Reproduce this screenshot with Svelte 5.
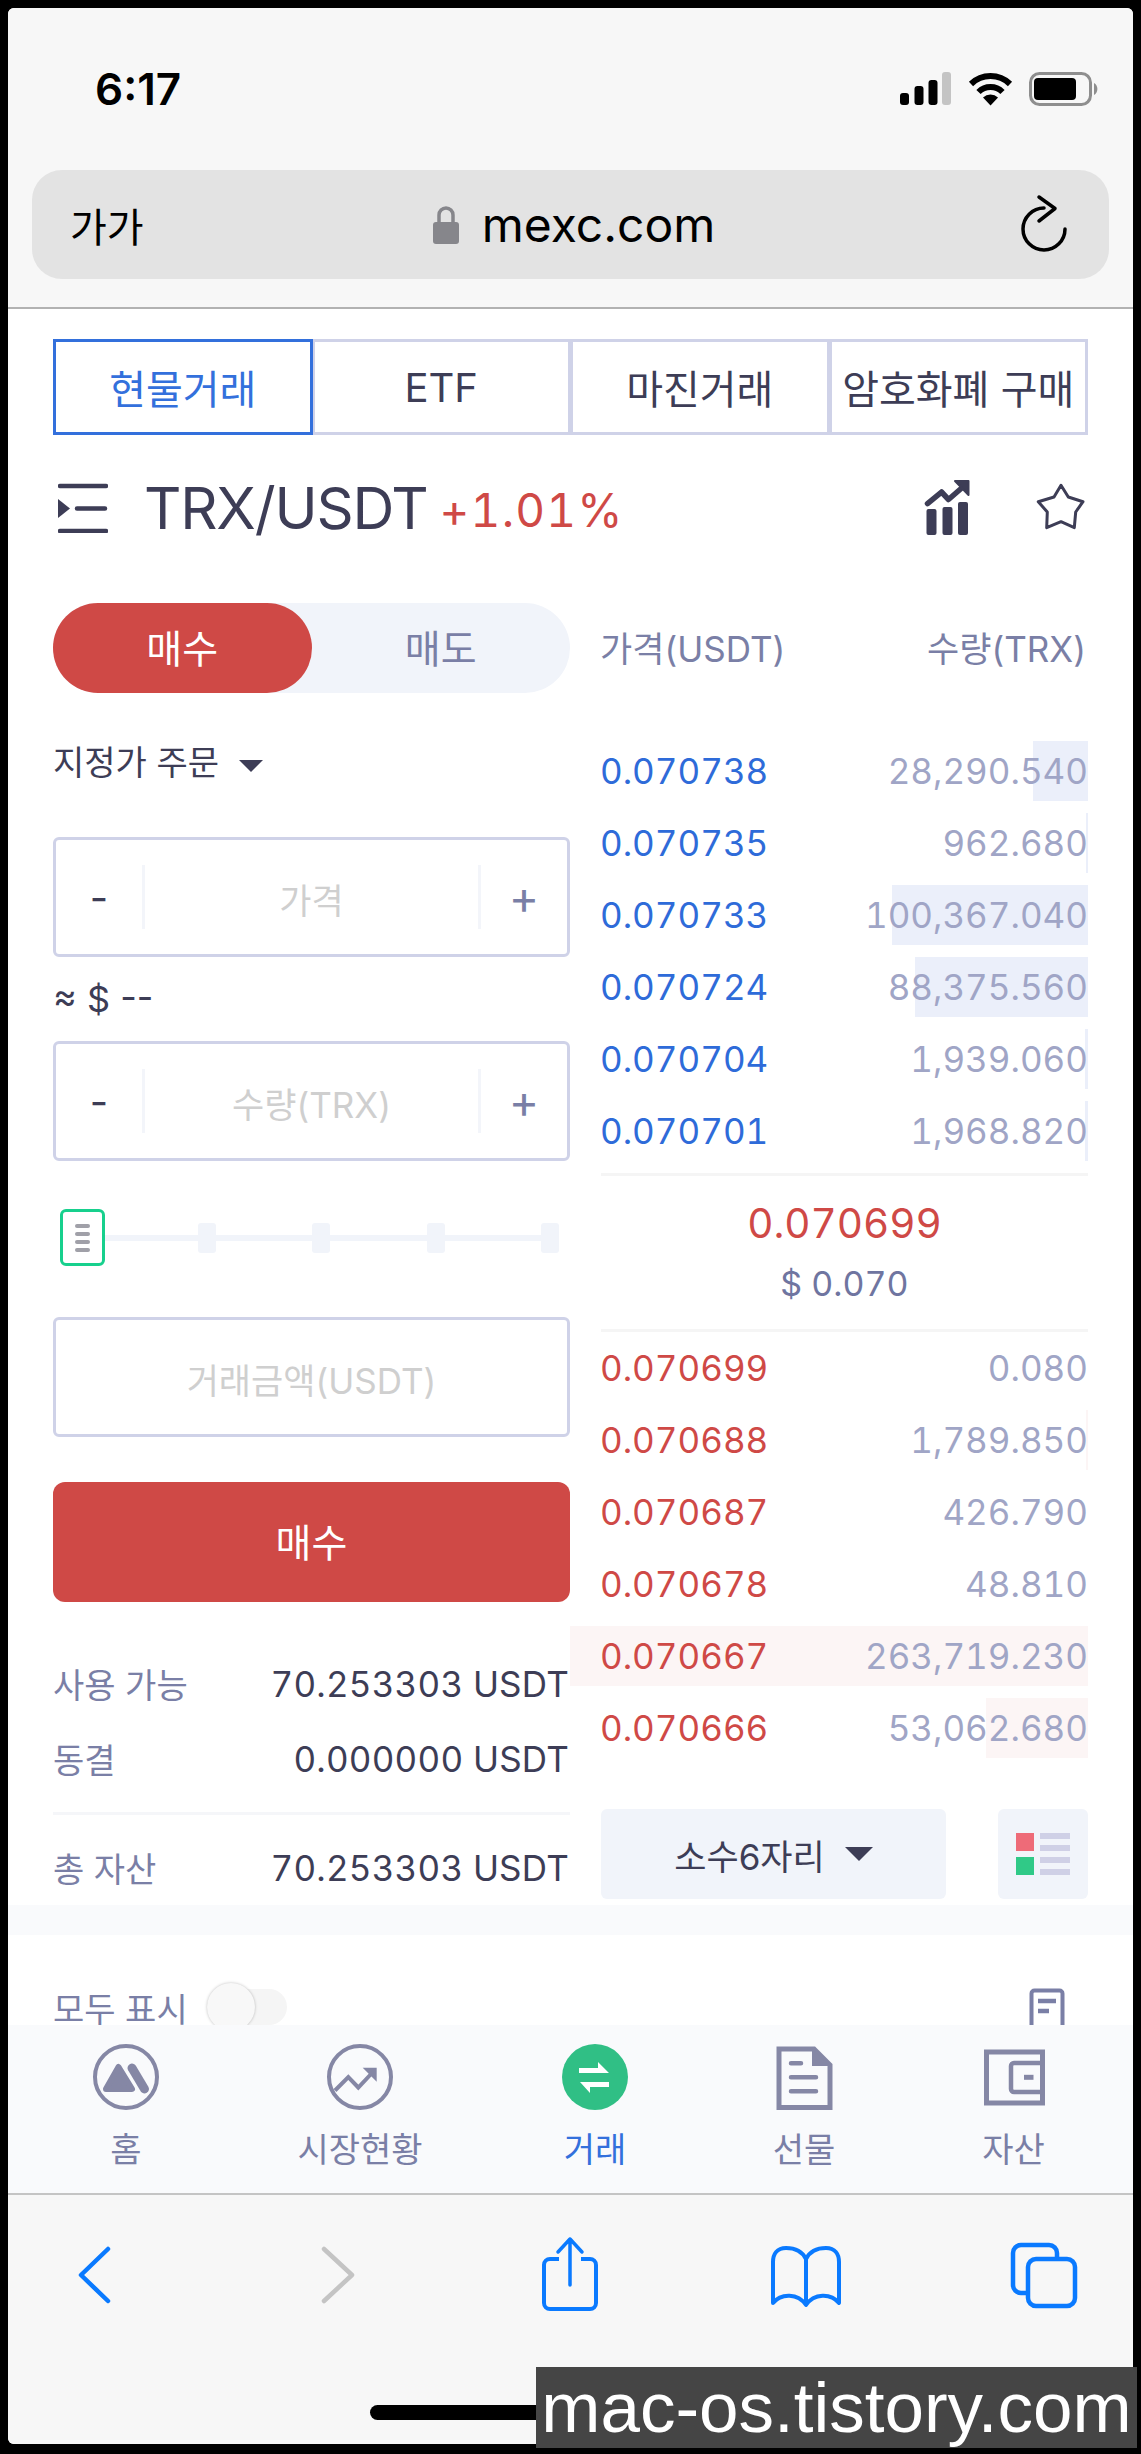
<script>
    const tabs = ['현물거래', 'ETF', '마진거래', '암호화폐 구매'];

    const asks = [
        { price: '0.070738', qty: '28,290.540', bar: 55 },
        { price: '0.070735', qty: '962.680', bar: 2 },
        { price: '0.070733', qty: '100,367.040', bar: 196 },
        { price: '0.070724', qty: '88,375.560', bar: 173 },
        { price: '0.070704', qty: '1,939.060', bar: 3 },
        { price: '0.070701', qty: '1,968.820', bar: 3 }
    ];
    const bids = [
        { price: '0.070699', qty: '0.080', bar: 0 },
        { price: '0.070688', qty: '1,789.850', bar: 2 },
        { price: '0.070687', qty: '426.790', bar: 0 },
        { price: '0.070678', qty: '48.810', bar: 0 },
        { price: '0.070667', qty: '263,719.230', bar: 518 },
        { price: '0.070666', qty: '53,062.680', bar: 102 }
    ];
</script>

<div class="frame">
    <div class="screen">
        <header class="browser">
            <div class="status">
                <span class="time">6:17</span>
                <div class="status-icons">
                    <svg width="52" height="34" viewBox="0 0 52 34">
                        <rect x="0" y="21" width="9" height="12" rx="3" fill="#000"/>
                        <rect x="14.5" y="14" width="9" height="19" rx="3" fill="#000"/>
                        <rect x="28.5" y="8" width="9" height="25" rx="3" fill="#000"/>
                        <rect x="42" y="0" width="9" height="33" rx="3" fill="#c4c4c4"/>
                    </svg>
                    <svg width="45" height="34" viewBox="0 0 45 34">
                        <path d="M3 12A28 28 0 0 1 42 12M10.500 20A17 17 0 0 1 34.500 20" fill="none" stroke="#000" stroke-width="6"/>
                        <path d="M22.500 33.500L15 25.500A11 11 0 0 1 30 25.500Z" fill="#000"/>
                    </svg>
                    <svg width="70" height="34" viewBox="0 0 70 34">
                        <rect x="1.500" y="1.500" width="60" height="31" rx="9" fill="none" stroke="#8e8e8e" stroke-width="3"/>
                        <rect x="5" y="6" width="42" height="22" rx="4" fill="#000"/>
                        <path d="M65 11a7 7 0 0 1 0 12z" fill="#8e8e8e"/>
                    </svg>
                </div>
            </div>
            <div class="urlbar">
                <span class="aa">가가</span>
                <div class="url">
                    <svg width="28" height="39" viewBox="0 0 28 39">
                        <path d="M7 18V10a7 7 0 0 1 14 0V18" fill="none" stroke="#86868b" stroke-width="3.500"/>
                        <rect x="1" y="17" width="26" height="22" rx="3" fill="#86868b"/>
                    </svg>
                    <span>mexc.com</span>
                </div>
                <svg class="reload" width="54" height="62" viewBox="0 0 54 62">
                    <path d="M27 14A21 21 0 1 0 48 35" fill="none" stroke="#000" stroke-width="3.500" stroke-linecap="round"/>
                    <path d="M22 3L38 14.500L22 27" fill="none" stroke="#000" stroke-width="3.500" stroke-linecap="round" stroke-linejoin="round"/>
                </svg>
            </div>
        </header>

        <main class="page">
            <div class="tabs">
                {#each tabs as tab, i}
                    <div class="tab" class:active={i === 0}>{tab}</div>
                {/each}
            </div>

            <div class="market">
                <svg class="menu" width="50" height="50" viewBox="0 0 50 50">
                    <path d="M2 3H48M19 25.500H47M2 48H48" fill="none" stroke="#3d3d56" stroke-width="4.500" stroke-linecap="round"/>
                    <path d="M0 16L12 25.500L0 35Z" fill="#3d3d56"/>
                </svg>
                <span class="pair">TRX/USDT</span>
                <span class="change">+1.01%</span>
                <svg class="chart" width="60" height="70" viewBox="0 0 60 70">
                    <rect x="6.500" y="37" width="10" height="26" rx="2" fill="#3d3d56"/>
                    <rect x="22.500" y="35" width="10" height="28" rx="2" fill="#3d3d56"/>
                    <rect x="38" y="30" width="10" height="33" rx="2" fill="#3d3d56"/>
                    <path d="M7.500 31.500L21.500 20L28.500 27.500L44 14" fill="none" stroke="#3d3d56" stroke-width="5.500" stroke-linecap="round" stroke-linejoin="round"/>
                    <path d="M35 9H48.500V23Z" fill="#3d3d56" stroke="#3d3d56" stroke-width="2" stroke-linejoin="round"/>
                </svg>
                <svg class="star" width="60" height="60" viewBox="0 0 60 60">
                    <polygon points="31,9.300 38.300,21 53,25.700 45.700,36 44.300,51.700 31,45.700 16.700,51.700 17.300,36 8.300,25.700 24,21" fill="none" stroke="#3d3d56" stroke-width="3" stroke-linejoin="round"/>
                </svg>
            </div>

            <div class="trade">
                <section class="form">
                    <div class="side">
                        <div class="buy">매수</div>
                        <div class="sell">매도</div>
                    </div>
                    <div class="order-type">지정가 주문 <i class="caret"></i></div>

                    <div class="input">
                        <span class="minus">-</span>
                        <span class="ph">가격</span>
                        <span class="plus">+</span>
                    </div>
                    <div class="approx">≈ $ --</div>
                    <div class="input">
                        <span class="minus">-</span>
                        <span class="ph">수량(TRX)</span>
                        <span class="plus">+</span>
                    </div>

                    <div class="slider">
                        <div class="thumb"><b></b><b></b><b></b><b></b></div>
                        <div class="ticks"><i></i><i></i><i></i><i></i></div>
                    </div>

                    <div class="input total"><span class="ph">거래금액(USDT)</span></div>
                    <div class="submit">매수</div>

                    <div class="info first"><span>사용 가능</span><strong>70.253303 USDT</strong></div>
                    <div class="info"><span>동결</span><strong>0.000000 USDT</strong></div>
                    <div class="info last"><span>총 자산</span><strong>70.253303 USDT</strong></div>
                </section>

                <section class="book">
                    <div class="book-head"><span>가격(USDT)</span><span>수량(TRX)</span></div>
                    <div class="asks">
                        {#each asks as row}
                            <div class="row">
                                <i class="depth" style="width: {row.bar}px"></i>
                                <span class="price">{row.price}</span>
                                <span class="qty">{row.qty}</span>
                            </div>
                        {/each}
                    </div>
                    <div class="mid">
                        <div class="last-price">0.070699</div>
                        <div class="usd"><span>$</span> 0.070</div>
                    </div>
                    <div class="bids">
                        {#each bids as row}
                            <div class="row">
                                <i class="depth" style="width: {row.bar}px"></i>
                                <span class="price">{row.price}</span>
                                <span class="qty">{row.qty}</span>
                            </div>
                        {/each}
                    </div>
                    <div class="book-foot">
                        <div class="decimals">소수6자리 <i class="caret"></i></div>
                        <div class="layout-btn">
                            <svg width="54" height="42" viewBox="0 0 54 42">
                                <rect x="0" y="0" width="18" height="18" fill="#ee6b78"/>
                                <rect x="0" y="24" width="18" height="18" fill="#30c987"/>
                                <rect x="24" y="0" width="30" height="6" fill="#cfd0e6"/>
                                <rect x="24" y="12" width="30" height="6" fill="#cfd0e6"/>
                                <rect x="24" y="24" width="30" height="6" fill="#cfd0e6"/>
                                <rect x="24" y="36" width="30" height="6" fill="#cfd0e6"/>
                            </svg>
                        </div>
                    </div>
                </section>
            </div>

            <div class="band"></div>

            <div class="orders-head">
                <span>모두 표시</span>
                <div class="toggle"></div>
                <svg class="history" width="36" height="54" viewBox="0 0 36 54">
                    <rect x="2.500" y="2.500" width="31" height="49" rx="3" fill="none" stroke="#7a7fa6" stroke-width="4"/>
                    <path d="M9 13H27M9 23H20" stroke="#7a7fa6" stroke-width="4.500"/>
                </svg>
            </div>
        </main>

        <nav class="tabbar">
            <div class="nav-item">
                <svg width="70" height="70" viewBox="0 0 70 70">
                    <circle cx="35" cy="35" r="31" fill="none" stroke="#8587a5" stroke-width="4"/>
                    <polygon points="15,47 27.500,25 41,47" fill="#8587a5" stroke="#8587a5" stroke-width="6" stroke-linejoin="round"/>
                    <path d="M41 26L53.500 47" stroke="#8587a5" stroke-width="9" stroke-linecap="round"/>
                </svg>
                <span>홈</span>
            </div>
            <div class="nav-item">
                <svg width="70" height="70" viewBox="0 0 70 70">
                    <circle cx="35" cy="35" r="31" fill="none" stroke="#8587a5" stroke-width="4"/>
                    <path d="M10 48.500L23.300 35L33.300 45.500L47 31" fill="none" stroke="#8587a5" stroke-width="4"/>
                    <path d="M37.700 25.700H51.700V39.700Z" fill="#8587a5"/>
                </svg>
                <span>시장현황</span>
            </div>
            <div class="nav-item current">
                <svg width="70" height="70" viewBox="0 0 70 70">
                    <circle cx="35" cy="35" r="33" fill="#30bf85"/>
                    <path d="M19 26H38V20L49 31H19ZM20 40H49V45H30V51Z" fill="#fff"/>
                </svg>
                <span>거래</span>
            </div>
            <div class="nav-item">
                <svg width="70" height="70" viewBox="0 0 70 70">
                    <path d="M10 7H45L61 23V65.500H10Z" fill="none" stroke="#8587a5" stroke-width="5"/>
                    <path d="M43 7L61 24H43Z" fill="#8587a5"/>
                    <path d="M22 21.300H32M22 35.300H47M22 49.300H47" stroke="#8587a5" stroke-width="4.500" stroke-linecap="round"/>
                </svg>
                <span>선물</span>
            </div>
            <div class="nav-item">
                <svg width="70" height="70" viewBox="0 0 70 70">
                    <rect x="7.500" y="10" width="56" height="51" fill="none" stroke="#8587a5" stroke-width="5"/>
                    <path d="M64 21H35a3 3 0 0 0-3 3V47a3 3 0 0 0 3 3H64" fill="none" stroke="#8587a5" stroke-width="4.500"/>
                    <path d="M45 35.300H54.500" stroke="#8587a5" stroke-width="5"/>
                </svg>
                <span>자산</span>
            </div>
        </nav>

        <footer class="toolbar">
            <div class="tools">
                <svg width="80" height="80" viewBox="0 0 80 80">
                    <path d="M54 16L27 42L54 68" fill="none" stroke="#0a7aff" stroke-width="4.500" stroke-linecap="round" stroke-linejoin="round"/>
                </svg>
                <svg width="80" height="80" viewBox="0 0 80 80">
                    <path d="M26 16L54 42L26 68" fill="none" stroke="#c4c4c4" stroke-width="4.500" stroke-linecap="round" stroke-linejoin="round"/>
                </svg>
                <svg width="80" height="80" viewBox="0 0 80 80">
                    <path d="M29 26H20a6 6 0 0 0-6 6v38a6 6 0 0 0 6 6h40a6 6 0 0 0 6-6V32a6 6 0 0 0-6-6H51" fill="none" stroke="#0a7aff" stroke-width="4"/>
                    <path d="M40 52V6M28 19L40 6L52 19" fill="none" stroke="#0a7aff" stroke-width="3.500" stroke-linecap="round" stroke-linejoin="round"/>
                </svg>
                <svg width="80" height="80" viewBox="0 0 80 80">
                    <path d="M40 26C36 18 28 15 20 15C11 15 7 21 7 29V70C15 60 32 60 40 72C48 60 65 60 73 70V29C73 21 69 15 60 15C52 15 44 18 40 26ZM40 26V72" fill="none" stroke="#0a7aff" stroke-width="4" stroke-linejoin="round"/>
                </svg>
                <svg width="80" height="80" viewBox="0 0 80 80">
                    <rect x="25" y="26" width="47" height="47" rx="8" fill="none" stroke="#0a7aff" stroke-width="4.500"/>
                    <path d="M23 60H18a8 8 0 0 1-8-8V20a8 8 0 0 1 8-8H46a8 8 0 0 1 8 8V24" fill="none" stroke="#0a7aff" stroke-width="4.500"/>
                </svg>
            </div>
            <div class="home-bar"></div>
        </footer>
    </div>
    <div class="watermark">mac-os.tistory.com</div>
</div>

<style>
    :global(body) {
        margin: 0;
        background: #000;
    }
    .frame {
        position: relative;
        width: 1141px;
        height: 2454px;
        box-sizing: border-box;
        padding: 8px 8px 10px;
        background: #000;
        font-family: Inter, "Noto Sans CJK KR", sans-serif;
        color: #3d3d56;
        overflow: hidden;
    }
    .screen {
        display: flex;
        flex-direction: column;
        height: 2436px;
        background: #fff;
        border-radius: 6px;
        overflow: hidden;
    }

    .browser {
        flex: none;
        height: 301px;
        box-sizing: border-box;
        padding: 0 24px;
        background: #f7f7f7;
        border-bottom: 2px solid #b2b2b2;
    }
    .status {
        display: flex;
        justify-content: space-between;
        align-items: center;
        height: 162px;
        padding: 0 10px 0 63px;
    }
    .time {
        font-size: 44px;
        font-weight: 600;
        color: #000;
    }
    .status-icons {
        display: flex;
        align-items: center;
        gap: 16px;
    }
    .urlbar {
        display: flex;
        align-items: center;
        height: 109px;
        padding: 0 38px;
        background: #e3e3e3;
        border-radius: 30px;
    }
    .aa {
        width: 76px;
        font-size: 40px;
        color: #000;
    }
    .url {
        flex: 1;
        display: flex;
        justify-content: center;
        align-items: center;
        gap: 22px;
        font-size: 48px;
        color: #000;
    }
    .reload {
        width: 54px;
        margin-left: 16px;
    }

    .page {
        flex: 1;
        min-height: 0;
        overflow: hidden;
        background: #fff;
    }
    .tabs {
        display: flex;
        margin: 30px 46px 0;
        width: 1034px;
    }
    .tab {
        flex: 1;
        height: 96px;
        box-sizing: border-box;
        display: flex;
        justify-content: center;
        align-items: center;
        border: 3px solid #cfd2e8;
        margin-left: -1px;
        font-size: 40px;
        white-space: nowrap;
    }
    .tab.active {
        border: 3px solid #3370dc;
        color: #3370dc;
        position: relative;
        z-index: 1;
    }

    .market {
        display: flex;
        align-items: center;
        height: 130px;
        padding: 0 43px 0 50px;
        margin-top: 8px;
    }
    .menu {
        margin-right: 36px;
    }
    .pair {
        font-size: 58px;
        letter-spacing: -1.200px;
    }
    .change {
        font-size: 46px;
        letter-spacing: 1.200px;
        font-variant-numeric: tabular-nums;
        color: #cf4946;
        margin-left: 12px;
        margin-top: 4px;
    }
    .chart {
        margin-left: auto;
        margin-bottom: 3px;
    }
    .star {
        margin-left: 50px;
        margin-bottom: 4px;
    }

    .trade {
        display: grid;
        grid-template-columns: 517px 518px;
        margin: 30px 0 0 45px;
        height: 1302px;
    }

    .side {
        display: flex;
        height: 90px;
        background: #f1f4fa;
        border-radius: 45px;
        font-size: 39px;
        color: #7a7fa6;
    }
    .side div {
        flex: 1;
        display: flex;
        justify-content: center;
        align-items: center;
        padding-bottom: 4px;
    }
    .side .buy {
        background: #cf4946;
        color: #fff;
        border-radius: 45px;
    }
    .order-type {
        margin-top: 50px;
        height: 40px;
        line-height: 40px;
        font-size: 34px;
    }
    .caret {
        display: inline-block;
        width: 0;
        height: 0;
        margin-left: 10px;
        vertical-align: middle;
        border-left: 12px solid transparent;
        border-right: 12px solid transparent;
        border-top: 12px solid #3d3d56;
    }
    .input {
        display: flex;
        align-items: center;
        height: 120px;
        box-sizing: border-box;
        border: 3px solid #cfd2e8;
        border-radius: 6px;
    }
    .order-type + .input {
        margin-top: 54px;
    }
    .minus,
    .plus {
        flex: none;
        display: flex;
        justify-content: center;
        align-items: center;
        width: 86px;
        height: 64px;
        font-size: 40px;
    }
    .minus {
        border-right: 3px solid #f3f5fa;
    }
    .plus {
        border-left: 3px solid #f3f5fa;
        color: #7a7fa6;
        font-size: 46px;
    }
    .ph {
        flex: 1;
        text-align: center;
        padding-top: 3px;
        font-size: 35px;
        color: #cfcfcf;
    }
    .approx {
        height: 84px;
        line-height: 84px;
        font-size: 36px;
    }
    .slider {
        position: relative;
        display: flex;
        align-items: center;
        height: 57px;
        margin: 48px 0 0 7px;
    }
    .thumb {
        position: relative;
        z-index: 1;
        flex: none;
        display: flex;
        flex-direction: column;
        justify-content: center;
        align-items: center;
        gap: 4px;
        width: 45px;
        height: 57px;
        box-sizing: border-box;
        background: #fff;
        border: 3px solid #17d08d;
        border-radius: 6px;
    }
    .thumb b {
        width: 15px;
        height: 4px;
        background: #a0a0a8;
        border-radius: 2px;
    }
    .ticks {
        flex: 1;
        display: flex;
        justify-content: flex-end;
        gap: 96.500px;
        margin-right: 11px;
        height: 30px;
        background: linear-gradient(#f1f4fa, #f1f4fa) center / 100% 6px no-repeat;
    }
    .ticks i {
        width: 18px;
        height: 30px;
        background: #f1f4fa;
        border-radius: 3px;
    }
    .total {
        margin-top: 51px;
    }
    .submit {
        display: flex;
        justify-content: center;
        align-items: center;
        height: 120px;
        margin-top: 45px;
        box-sizing: border-box;
        padding-bottom: 4px;
        background: #cf4946;
        border-radius: 12px;
        font-size: 39px;
        color: #fff;
    }
    .info {
        display: flex;
        justify-content: space-between;
        align-items: center;
        height: 75px;
        font-size: 34px;
        color: #7a7fa6;
    }
    .info strong {
        font-weight: 400;
        font-size: 35px;
        letter-spacing: 0.200px;
        font-variant-numeric: tabular-nums;
        color: #3d3d56;
        margin-right: 1px;
    }
    .info.first {
        margin-top: 44px;
    }
    .info.last {
        margin-top: 16px;
        padding-top: 13px;
        border-top: 3px solid #f5f6f9;
        box-sizing: content-box;
        height: 79px;
    }

    .book {
        display: flex;
        flex-direction: column;
    }
    .book-head {
        display: flex;
        justify-content: space-between;
        align-items: center;
        height: 90px;
        margin: 0 2px 0 30px;
        padding-bottom: 4px;
        box-sizing: border-box;
        font-size: 35px;
        color: #7a7fa6;
    }
    .asks {
        margin-top: 48px;
    }
    .row {
        position: relative;
        display: flex;
        justify-content: space-between;
        align-items: center;
        height: 60px;
        margin-bottom: 12px;
        padding: 0 0 1px 30px;
        box-sizing: border-box;
        font-size: 35px;
        font-variant-numeric: tabular-nums;
    }
    .depth {
        position: absolute;
        top: 0;
        right: 0;
        bottom: 0;
    }
    .asks .depth {
        background: #ebeffa;
    }
    .bids .depth {
        background: #fcf5f5;
    }
    .price,
    .qty {
        position: relative;
    }
    .asks .price {
        color: #2e6bd9;
    }
    .bids .price {
        color: #cf4946;
    }
    .qty {
        color: #a0a5c6;
    }
    .mid {
        display: flex;
        flex-direction: column;
        justify-content: center;
        align-items: center;
        height: 159px;
        margin-left: 31px;
        box-sizing: border-box;
        border-top: 3px solid #f5f5f5;
        border-bottom: 3px solid #f5f5f5;
        font-variant-numeric: tabular-nums;
    }
    .last-price {
        margin-top: 2px;
        font-size: 40.500px;
        color: #cf4946;
        line-height: 60px;
    }
    .usd {
        font-size: 34px;
        color: #6f75a0;
        line-height: 60px;
    }
    .bids {
        margin-top: 6px;
    }
    .book-foot {
        display: flex;
        justify-content: space-between;
        margin: 39px 0 0 31px;
    }
    .decimals {
        display: flex;
        justify-content: center;
        align-items: center;
        width: 345px;
        height: 90px;
        background: #f1f4fa;
        border-radius: 6px;
        font-size: 35px;
    }
    .decimals .caret {
        margin-left: 20px;
        border-left-width: 14px;
        border-right-width: 14px;
        border-top-width: 14px;
    }
    .layout-btn {
        display: flex;
        justify-content: center;
        align-items: center;
        width: 90px;
        height: 90px;
        background: #f1f4fa;
        border-radius: 6px;
    }

    .band {
        height: 30px;
        background: #f9fafc;
    }
    .orders-head {
        display: flex;
        align-items: center;
        height: 90px;
        margin-top: 27px;
        padding: 0 68px 0 45px;
        font-size: 34px;
        color: #7a7fa6;
    }
    .toggle {
        position: relative;
        width: 80px;
        height: 36px;
        margin-left: 19px;
        background: #f5f5f5;
        border-radius: 18px;
    }
    .toggle::before {
        content: '';
        position: absolute;
        left: 0;
        top: -6px;
        width: 48px;
        height: 48px;
        background: #f8f8f8;
        border-radius: 50%;
        box-shadow: 0 0 3px rgba(0, 0, 0, 0.25);
    }
    .history {
        margin-left: auto;
        margin-top: 16px;
    }

    .tabbar {
        flex: none;
        display: grid;
        grid-template-columns: 236px 232px 238px 180px 239px;
        height: 170px;
        box-sizing: border-box;
        padding-top: 17px;
        background: #f9fafc;
        border-bottom: 2px solid #c4c4c4;
    }
    .nav-item {
        display: flex;
        flex-direction: column;
        align-items: center;
        font-size: 34px;
        line-height: 40px;
        color: #7a7fa6;
    }
    .nav-item span {
        margin-top: 18px;
    }
    .nav-item.current {
        color: #3370dc;
    }

    .toolbar {
        flex: none;
        height: 249px;
        background: #f7f7f7;
    }
    .tools {
        display: grid;
        grid-template-columns: 244px 232px 236px 237px 80px;
        padding: 38px 0 0 46px;
        height: 80px;
    }
    .home-bar {
        width: 402px;
        height: 15px;
        margin: 92px 0 0 362px;
        background: #000;
        border-radius: 8px;
    }

    .watermark {
        position: absolute;
        left: 536px;
        right: 4px;
        top: 2367px;
        height: 81px;
        display: flex;
        justify-content: center;
        align-items: center;
        background: #454545;
        font-family: "Liberation Sans", sans-serif;
        font-size: 71px;
        color: #fff;
        white-space: nowrap;
    }
</style>
